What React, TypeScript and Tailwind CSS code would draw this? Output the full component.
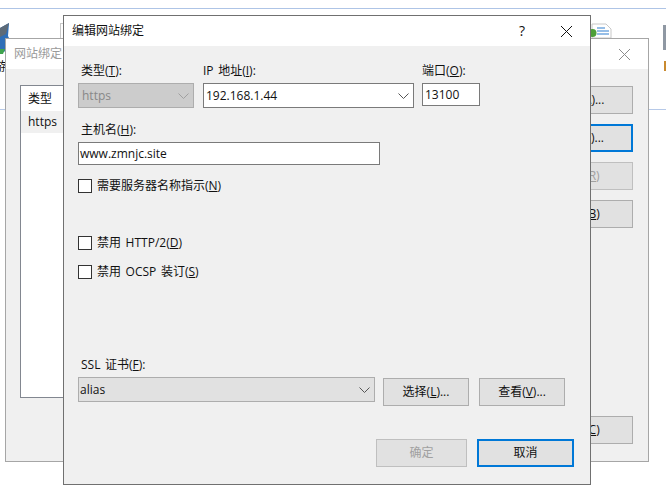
import React from "react";

const FONT = "font-['Open_Sans','Noto_Sans_CJK_SC',sans-serif] text-[12px] leading-[16px] text-[#111] [word-spacing:1.5px]";

function Chevron({ color = "#555" }: { color?: string }) {
  return (
    <svg width="11" height="6" viewBox="0 0 11 6" fill="none">
      <path d="M0.5 0.5 L5.5 5.5 L10.5 0.5" stroke={color} strokeWidth="1" />
    </svg>
  );
}

function CloseX({ color, size }: { color: string; size: number }) {
  return (
    <svg width={size} height={size} viewBox="0 0 10 10" fill="none">
      <path d="M0 0 L10 10 M10 0 L0 10" stroke={color} strokeWidth={10 / size} />
    </svg>
  );
}

function Label({ children, className = "" }: { children: React.ReactNode; className?: string }) {
  return <div className={`h-4 whitespace-nowrap ${className}`}>{children}</div>;
}

function Btn({ children, className = "" }: { children: React.ReactNode; className?: string }) {
  return (
    <div className={`flex h-[28px] shrink-0 items-center justify-center whitespace-nowrap border border-[#adadad] bg-[#e1e1e1] ${className}`}>
      {children}
    </div>
  );
}

function Check({ children, className = "" }: { children: React.ReactNode; className?: string }) {
  return (
    <div className={`flex h-[14px] items-center gap-[5px] whitespace-nowrap ${className}`}>
      <div className="h-[14px] w-[14px] border border-[#333] bg-white" />
      <span>{children}</span>
    </div>
  );
}

function BackDialog() {
  return (
    <div className="absolute left-[5px] top-[38px] flex h-[424px] w-[644px] flex-col border border-[#a6a6a6] bg-[#f0f0f0]">
      <div className="flex h-[30px] items-center justify-between bg-white pl-[8px] pr-[18px] text-[#9a9a9a]">
        <span>网站绑定</span>
        <CloseX color="#8c8c8c" size={11} />
      </div>
      <div className="flex flex-1 gap-[10px] pl-[14px] pr-[15px] pt-[16px]">
        <div className="flex h-[313px] w-[501px] flex-col border border-[#828790] bg-white">
          <div className="flex h-[25px] items-center pl-[7px]">类型</div>
          <div className="flex h-[22px] items-center bg-[#f0f0f0] pl-[7px]">https</div>
        </div>
        <div className="flex w-[106px] flex-col pt-[1px]">
          <Btn>添加(<u>A</u>)...</Btn>
          <Btn className="mt-[10px] border-2 !border-[#0078d7]">编辑(<u>E</u>)...</Btn>
          <Btn className="mt-[10px] !border-[#bfbfbf] bg-[#cccccc] text-[#a0a0a0]">删除(<u>R</u>)</Btn>
          <Btn className="mt-[10px]">浏览(<u>B</u>)</Btn>
          <Btn className="mt-[188px]">关闭(<u>C</u>)</Btn>
        </div>
      </div>
    </div>
  );
}

function FrontDialog() {
  return (
    <div className="absolute left-[63px] top-[15px] flex h-[470px] w-[528px] flex-col border border-[#707070] bg-[#f0f0f0]">
      <div className="flex h-[30px] items-center bg-white pl-[8px]">
        <span className="flex-1">编辑网站绑定</span>
        <span className="mr-[36px] text-[14px]">?</span>
        <div className="mr-[18px]">
          <CloseX color="#111" size={11} />
        </div>
      </div>
      <div className="flex flex-1 flex-col pl-[14px] pt-[17px]">
        <div className="flex h-[54px]">
          <div className="w-[125px]">
            <Label className="pl-[3px]">类型(<u>T</u>):</Label>
            <div className="mt-[4px] flex h-[25px] w-[116px] items-center justify-between border border-[#adadad] bg-[#cccccc] pl-[3px] pr-[4px] text-[#888]">
              <span>https</span>
              <Chevron color="#a0a0a0" />
            </div>
          </div>
          <div className="w-[219px]">
            <Label>IP 地址(<u>I</u>):</Label>
            <div className="mt-[4px] flex h-[25px] w-[211px] items-center justify-between border border-[#7a7a7a] bg-white pl-[2px] pr-[4px]">
              <span>192.168.1.44</span>
              <Chevron />
            </div>
          </div>
          <div>
            <Label>端口(<u>O</u>):</Label>
            <div className="mt-[4px] flex h-[23px] w-[58px] items-center border border-[#7a7a7a] bg-white pl-[2px]">13100</div>
          </div>
        </div>
        <Label className="mt-[5px] pl-[3px]">主机名(<u>H</u>):</Label>
        <div className="mt-[4px] flex h-[23px] w-[302px] items-center border border-[#7a7a7a] bg-white pl-[1px]">www.zmnjc.site</div>
        <Check className="mt-[14px]">需要服务器名称指示(<u>N</u>)</Check>
        <Check className="mt-[43px]">禁用 HTTP/2(<u>D</u>)</Check>
        <Check className="mt-[15px]">禁用 OCSP 装订(<u>S</u>)</Check>
        <Label className="mt-[78px] pl-[3px]">SSL 证书(<u>F</u>):</Label>
        <div className="mt-[4px] flex items-start">
          <div className="flex h-[25px] w-[297px] items-center justify-between border border-[#adadad] bg-[#e1e1e1] pl-[1px] pr-[4px]">
            <span>alias</span>
            <Chevron />
          </div>
          <Btn className="ml-[8px] mt-[1px] w-[86px]">选择(<u>L</u>)...</Btn>
          <Btn className="ml-[10px] mt-[1px] w-[86px]">查看(<u>V</u>)...</Btn>
        </div>
        <div className="ml-[298px] mt-[33px] flex">
          <Btn className="w-[91px] !border-[#bfbfbf] bg-[#cccccc] text-[#a0a0a0]">确定</Btn>
          <Btn className="ml-[10px] w-[97px] border-2 !border-[#0078d7]">取消</Btn>
        </div>
      </div>
    </div>
  );
}

export default function App() {
  return (
    <div className={`relative h-[494px] w-[666px] overflow-hidden bg-white ${FONT}`}>
      <div className="absolute left-0 top-[8px] h-px w-full bg-[#aec4e6]" />
      <div className="absolute left-0 top-[109px] h-px w-full bg-[#b6c9e8]" />
      {/* desktop icons behind the windows */}
      <svg className="absolute left-0 top-[22px]" width="12" height="34" viewBox="0 0 12 34">
        <path d="M0 6 L9 1 L8 14 L10 18 L9 27 L0 32 Z" fill="#2f6fb8" />
        <path d="M0 6 L9 1 L6 12 L0 15 Z" fill="#5d6b78" />
        <path d="M0 27 L5 27 L3 32 L0 32 Z" fill="#3fa34d" />
      </svg>
      <span className="absolute left-[-6px] top-[59px]">游</span>
      <div className="absolute left-[60px] top-[23px] h-[16px] w-[4px] border-l border-t border-[#c8c8c8]" />
      <svg className="absolute left-[588px] top-[23px]" width="24" height="16" viewBox="0 0 24 16">
        <path d="M4 1 H18 L23 6 V15 H4 Z" fill="#fff" stroke="#c8c8c8" />
        <path d="M9 5 H17 M9 8 H21 M9 11 H21" stroke="#2f7fd0" strokeWidth="1.2" />
        <circle cx="4.5" cy="10" r="4" fill="#4c9f38" />
      </svg>
      <div className="absolute left-[663px] top-[25px] h-[25px] w-[3px] bg-[#8f98a3]" />
      <div className="absolute left-[664px] top-[61px] h-[10px] w-[2px] bg-[#c98a30]" />
      <BackDialog />
      <FrontDialog />
    </div>
  );
}
